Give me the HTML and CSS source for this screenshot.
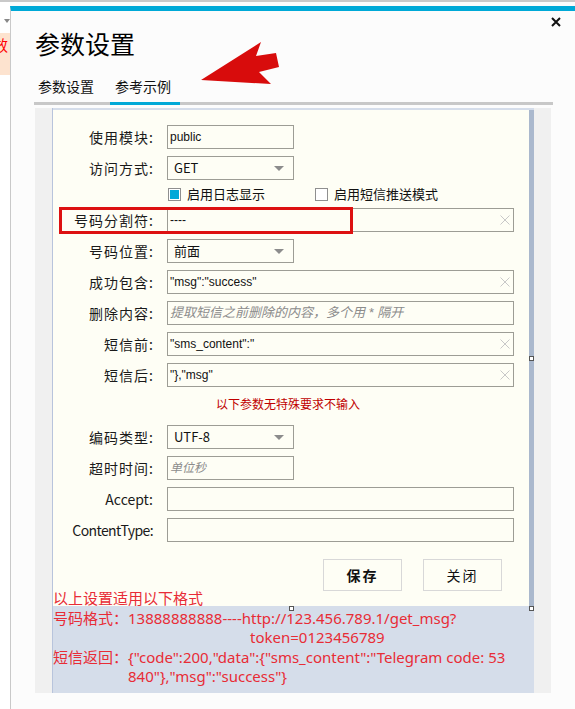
FILE: index.html
```html
<!DOCTYPE html>
<html>
<head>
  <meta charset="UTF-8">
  <title>参数设置</title>
  <link rel="stylesheet" href="styles.css">
</head>
<body>
  <div class="screen">
    <!-- page behind the dialog -->
    <div class="behind">
      <span class="behind-caret"></span>
      <div class="behind-cell">效</div>
    </div>

    <div class="dialog">
      <svg class="dialog-close" width="10" height="10" viewBox="0 0 10 10">
        <path d="M1 1 L9 9 M9 1 L1 9" stroke="#111" stroke-width="2" fill="none"/>
      </svg>

      <h1 class="dialog-title">参数设置</h1>

      <div class="tabs">
        <span class="tab">参数设置</span>
        <span class="tab active">参考示例</span>
      </div>

      <div class="tab-body">
        <div class="frame">
          <div class="panel">
            <div class="form-row">
              <label class="form-label">使用模块:</label>
              <input class="field field-short" type="text" value="public">
            </div>
            <div class="form-row">
              <label class="form-label">访问方式:</label>
              <span class="select">GET</span>
            </div>
            <div class="check-row">
              <span class="check"><span class="box checked"></span>启用日志显示</span>
              <span class="check"><span class="box"></span>启用短信推送模式</span>
            </div>
            <div class="form-row">
              <label class="form-label">号码分割符:</label>
              <span class="field-wrap">
                <input class="field field-long" type="text" value="----">
                <svg class="clear" width="10" height="10" viewBox="0 0 10 10"><path d="M0.5 0.5 L9.5 9.5 M9.5 0.5 L0.5 9.5" stroke="#c8c8c8" fill="none"/></svg>
              </span>
            </div>
            <div class="form-row">
              <label class="form-label">号码位置:</label>
              <span class="select">前面</span>
            </div>
            <div class="form-row">
              <label class="form-label">成功包含:</label>
              <span class="field-wrap">
                <input class="field field-long" type="text" value='"msg":"success"'>
                <svg class="clear" width="10" height="10" viewBox="0 0 10 10"><path d="M0.5 0.5 L9.5 9.5 M9.5 0.5 L0.5 9.5" stroke="#c8c8c8" fill="none"/></svg>
              </span>
            </div>
            <div class="form-row">
              <label class="form-label">删除内容:</label>
              <input class="field field-long field-hint-wide" type="text" placeholder="提取短信之前删除的内容，多个用 * 隔开">
            </div>
            <div class="form-row">
              <label class="form-label">短信前:</label>
              <span class="field-wrap">
                <input class="field field-long" type="text" value='"sms_content":"'>
                <svg class="clear" width="10" height="10" viewBox="0 0 10 10"><path d="M0.5 0.5 L9.5 9.5 M9.5 0.5 L0.5 9.5" stroke="#c8c8c8" fill="none"/></svg>
              </span>
            </div>
            <div class="form-row">
              <label class="form-label">短信后:</label>
              <span class="field-wrap">
                <input class="field field-long" type="text" value='"},"msg"'>
                <svg class="clear" width="10" height="10" viewBox="0 0 10 10"><path d="M0.5 0.5 L9.5 9.5 M9.5 0.5 L0.5 9.5" stroke="#c8c8c8" fill="none"/></svg>
              </span>
            </div>
            <div class="form-note">以下参数无特殊要求不输入</div>
            <div class="form-row">
              <label class="form-label">编码类型:</label>
              <span class="select">UTF-8</span>
            </div>
            <div class="form-row">
              <label class="form-label">超时时间:</label>
              <input class="field field-short" type="text" placeholder="单位秒">
            </div>
            <div class="form-row">
              <label class="form-label form-label-latin">Accept:</label>
              <input class="field field-long" type="text">
            </div>
            <div class="form-row">
              <label class="form-label form-label-tight">ContentType:</label>
              <input class="field field-long" type="text">
            </div>
            <div class="actions">
              <button class="btn btn-save">保存</button>
              <button class="btn">关闭</button>
            </div>
          </div>

          <div class="example">
            <p class="example-head">以上设置适用以下格式</p>
            <div class="example-item">
              <span class="example-key">号码格式：</span>
              <span class="example-val">13888888888----http://123.456.789.1/get_msg?<span class="example-wrap token">token=0123456789</span></span>
            </div>
            <div class="example-item">
              <span class="example-key">短信返回：</span>
              <span class="example-val">{"code":200,"data":{"sms_content":"Telegram code: 53<span class="example-wrap">840"},"msg":"success"}</span></span>
            </div>
          </div>

          <!-- design-mode resize handles -->
          <span class="handle handle-right"></span>
          <span class="handle handle-bottom"></span>
          <span class="handle handle-corner"></span>
        </div>
      </div>

      <!-- annotation overlays -->
      <div class="mark-box"></div>
      <svg class="mark-arrow" width="80" height="46" viewBox="0 0 80 46">
        <polygon points="1,40 61,2 56,16 76,13 79,27 59,32 71,44" fill="#d80c0c"/>
      </svg>
    </div>
  </div>
</body>
</html>
```

FILE: styles.css
```css
* {
  box-sizing: border-box;
}
body {
  margin: 0;
  background: #fcfcfc;
  font-family: "Noto Sans CJK SC", "Noto Sans", sans-serif;
  overflow: hidden;
}
.screen {
  display: flex;
  height: 709px;
  border-top: 2px solid #c9c9c9;
}

/* strip of the page behind */
.behind {
  width: 10px;
  flex: none;
  position: relative;
  overflow: hidden;
  background: #fff;
}
.behind-caret {
  position: absolute;
  left: 4px;
  top: 17px;
  border-left: 3px solid transparent;
  border-right: 3px solid transparent;
  border-top: 4px solid #888;
}
.behind-cell {
  margin-top: 31px;
  height: 42px;
  background: #fde3cf;
  color: #f00;
  font-size: 15px;
  line-height: 20px;
  padding-top: 2px;
  text-indent: -7px;
  white-space: nowrap;
}

/* dialog */
.dialog {
  flex: 1;
  margin-top: 4px;
  border-top: 5px solid #00a9d7;
  border-left: 1px solid #c9c9c9;
  position: relative;
}
.dialog-close {
  position: absolute;
  top: 6px;
  right: 14px;
}
.dialog-title {
  margin: 20px 0 0 24px;
  font-size: 25px;
  line-height: 25px;
  font-weight: normal;
  color: #000;
}
.tabs {
  display: flex;
  gap: 7px;
  width: 519px;
  margin: 23px 0 0 23px;
  border-bottom: 3px solid #c8c8c8;
}
.tab {
  font-size: 14px;
  line-height: 14px;
  padding: 0 9px 9px 5px;
  color: #111;
}
.tab:first-child {
  margin-left: -1px;
}
.tab.active {
  border-bottom: 3px solid #00a9d7;
  margin-bottom: -3px;
}

.tab-body {
  display: flex;
  width: 516px;
  height: 585px;
  margin: 3px 0 0 24px;
  padding: 0 17px;
  background: #f0f0f0;
}
.frame {
  flex: 1;
  position: relative;
  background: #d5ddea;
  border-left: 1px solid #b8c4dc;
}

/* form panel */
.panel {
  margin: 2px 5px 0 0;
  padding: 15px 0;
  background: #fefef5;
  box-shadow: 5px 0 0 #aab8cd;
}
.form-row {
  display: flex;
  align-items: center;
  height: 24px;
  margin-bottom: 7px;
}
.form-label {
  width: 101px;
  margin-right: 13px;
  text-align: right;
  font-size: 14px;
  letter-spacing: 1px;
  color: #1a1a1a;
}
.form-label-latin {
  letter-spacing: 0;
  padding-right: 1px;
}
.form-label-tight {
  letter-spacing: -0.6px;
  padding-right: 1px;
}
.field {
  height: 24px;
  border: 1px solid #9d9d95;
  background: #fefef5;
  font-family: "Liberation Sans", "Noto Sans CJK SC", sans-serif;
  font-size: 12px;
  color: #111;
  padding: 0 2px;
  outline: none;
}
.field::placeholder {
  color: #8c8c8c;
  font-style: italic;
}
.field-hint-wide::placeholder {
  font-size: 13px;
}
.field-short {
  width: 127px;
}
.field-long {
  width: 347px;
}
.field-wrap {
  position: relative;
  display: flex;
}
.clear {
  position: absolute;
  right: 4px;
  top: 7px;
}
.select {
  position: relative;
  width: 127px;
  height: 24px;
  border: 1px solid #9d9d95;
  font-size: 13px;
  line-height: 22px;
  padding-left: 6px;
  color: #111;
}
.select::after {
  content: "";
  position: absolute;
  right: 9px;
  top: 9px;
  border-left: 5px solid transparent;
  border-right: 5px solid transparent;
  border-top: 5px solid #8c8c8c;
}

.check-row {
  display: flex;
  height: 14px;
  margin-bottom: 7px;
  padding-left: 115px;
  font-size: 13px;
  line-height: 14px;
  color: #111;
}
.check {
  display: flex;
  align-items: center;
  gap: 6px;
  margin-right: 50px;
}
.box {
  width: 13px;
  height: 13px;
  border: 1px solid #8f8f8f;
  background: #fff;
}
.box.checked {
  background: #00a8d8;
  box-shadow: inset 0 0 0 1px #fff;
}

.form-note {
  height: 24px;
  margin-bottom: 7px;
  padding-right: 6px;
  text-align: center;
  font-size: 12px;
  line-height: 20px;
  color: #c00000;
}

.actions {
  display: flex;
  gap: 21px;
  margin-top: 17px;
  padding-left: 270px;
}
.btn {
  width: 79px;
  height: 32px;
  border: 1px solid #d8d8d8;
  background: #fefef5;
  font-family: inherit;
  font-size: 14px;
  letter-spacing: 2px;
  color: #111;
}
.btn-save {
  font-weight: bold;
}

/* example text under the panel */
.example {
  position: relative;
  margin-top: -17px;
  color: #e82c36;
  font-family: "Noto Sans", "Noto Sans CJK SC", sans-serif;
  font-size: 15px;
  line-height: 19.5px;
}
.example-head {
  margin: 0;
}
.example-item {
  display: flex;
}
.example-key {
  flex: none;
}
.example-wrap {
  display: block;
}
.example-wrap.token {
  padding-left: 122px;
}

.handle {
  position: absolute;
  width: 5px;
  height: 5px;
  border: 1px solid #555;
  background: #fff;
}
.handle-right {
  left: 476px;
  top: 248px;
}
.handle-bottom {
  left: 236px;
  top: 498px;
}
.handle-corner {
  left: 476px;
  top: 498px;
}

/* annotations */
.mark-box {
  position: absolute;
  left: 48px;
  top: 196px;
  width: 294px;
  height: 27px;
  border: 3px solid #dd1111;
}
.mark-arrow {
  position: absolute;
  left: 189px;
  top: 29px;
}
```
